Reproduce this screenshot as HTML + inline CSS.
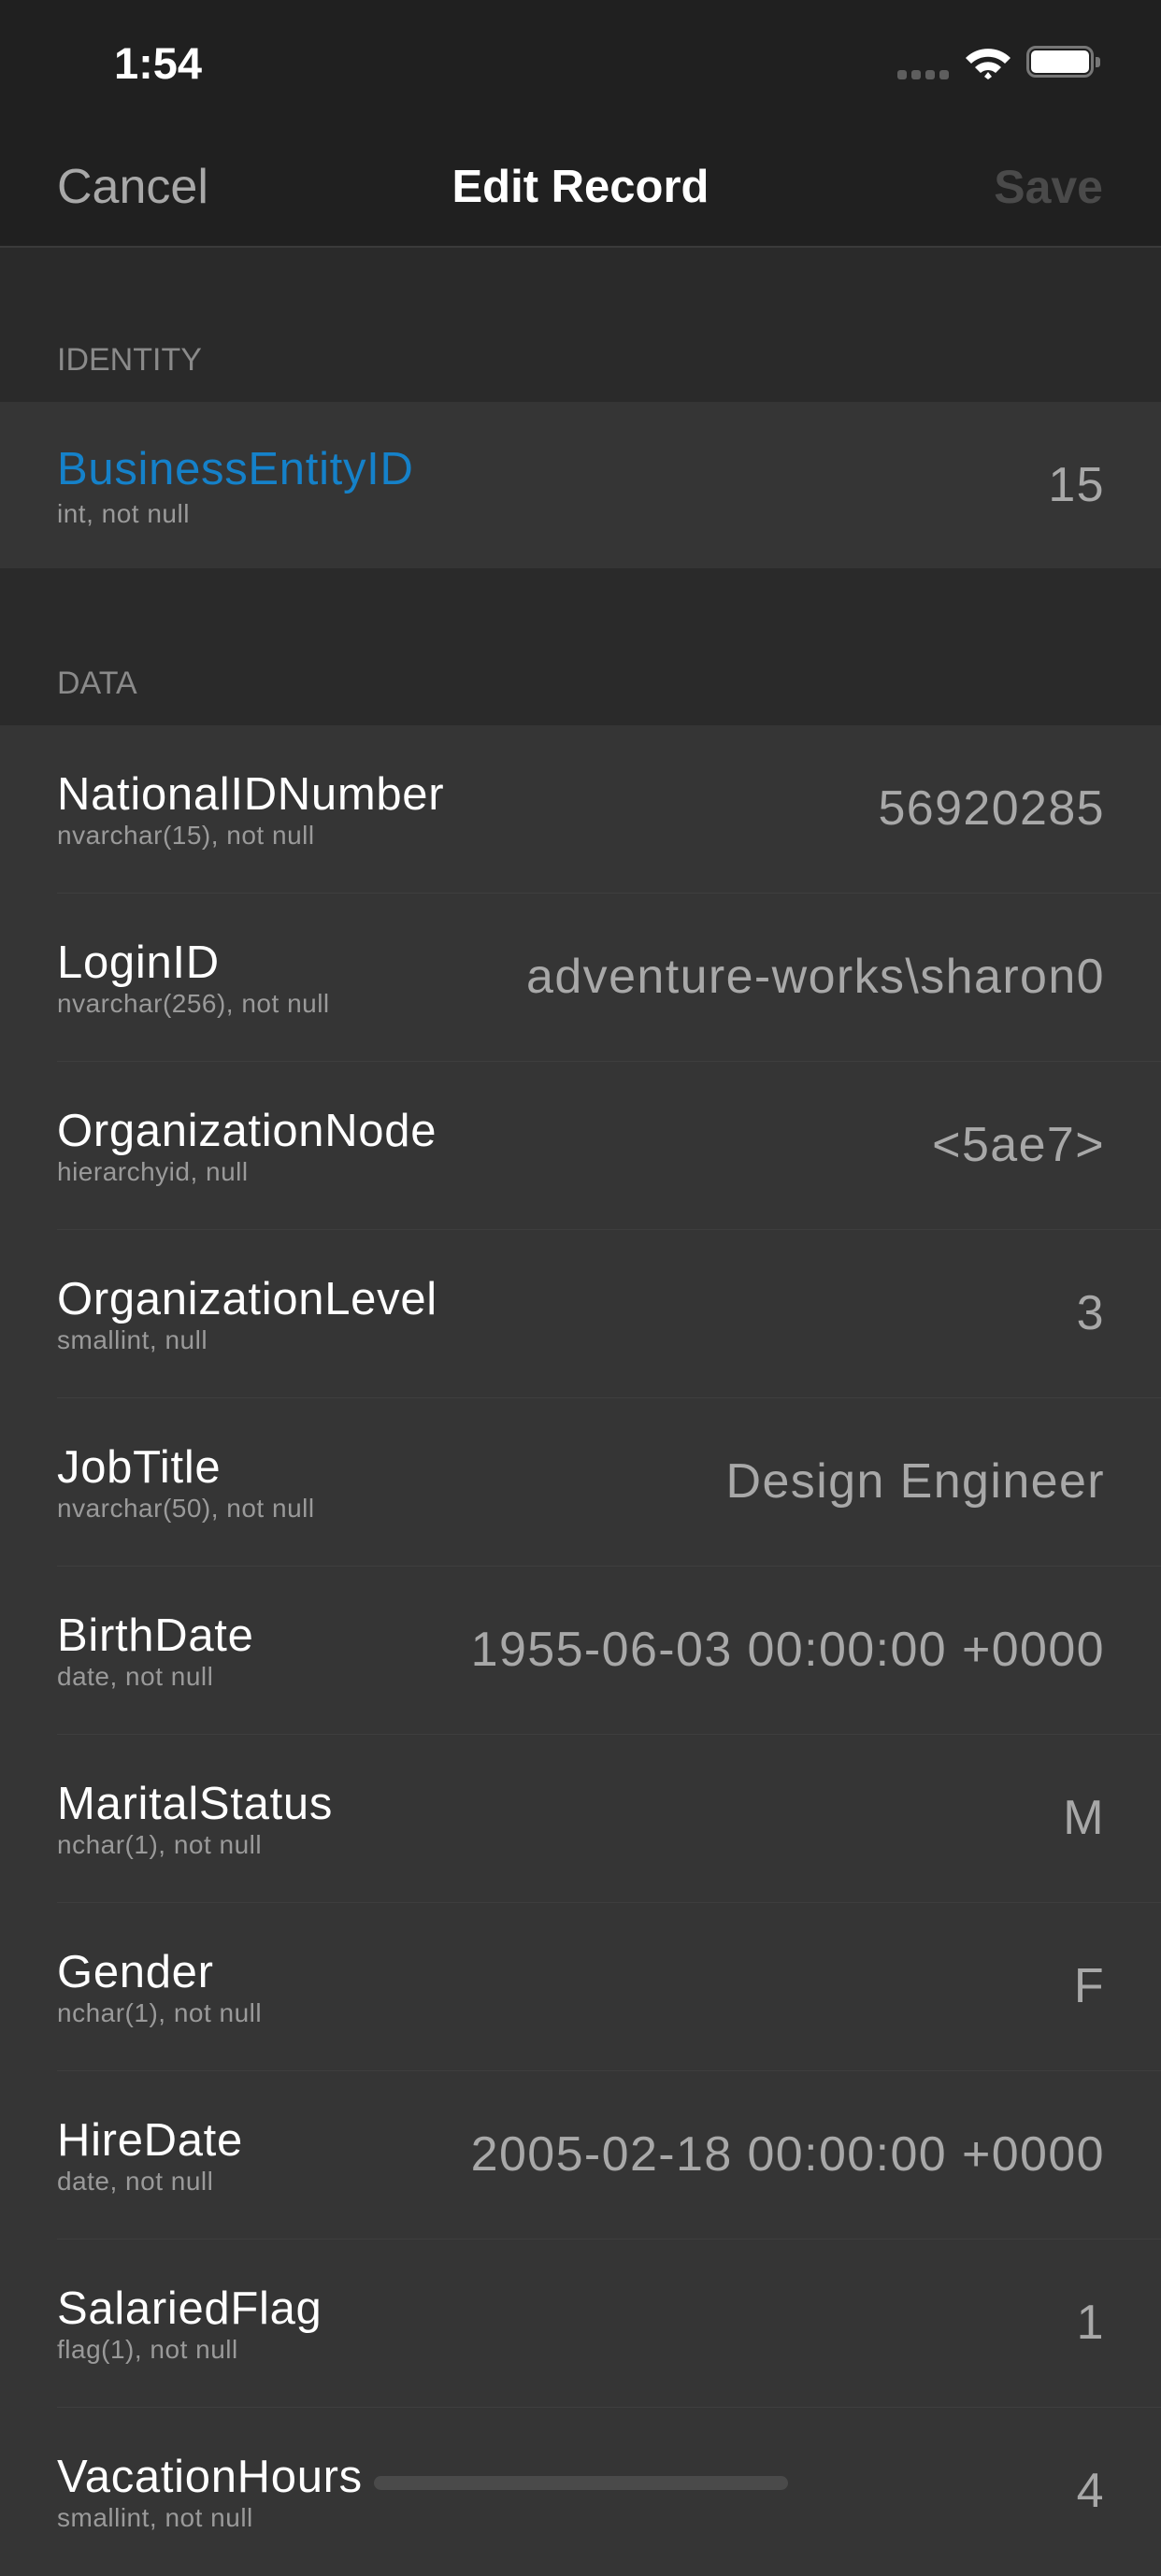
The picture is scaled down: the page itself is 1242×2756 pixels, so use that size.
<!DOCTYPE html>
<html><head><meta charset="utf-8"><style>
*{margin:0;padding:0;box-sizing:border-box}
body{width:1242px;height:2688px;background:#2a2a2a;font-family:"Liberation Sans",sans-serif;position:relative;overflow:hidden}
.a{position:absolute;white-space:nowrap}
.nav{position:absolute;left:0;top:0;width:1242px;height:265px;background:#202020;border-bottom:2px solid #3a3a3a}
.row{position:absolute;left:0;width:1242px;height:180px;background:#353535}
.sep{position:absolute;left:61px;right:0;bottom:0;height:1px;background:#3e3e3e}
.t{position:absolute;left:61px;font-size:49px;letter-spacing:0.7px;color:#fff;line-height:60px;white-space:nowrap}
.s{position:absolute;left:61px;font-size:28px;letter-spacing:0.5px;color:#9a9a9a;line-height:32px;white-space:nowrap}
.v{position:absolute;right:60px;font-size:52px;letter-spacing:1.4px;color:#a8a8a8;line-height:60px;white-space:nowrap}
.h{position:absolute;left:61px;font-size:34px;color:#8a8a8a;line-height:40px}
</style></head><body>
<div class="nav">
<div class="a" style="left:122px;top:40px;font-size:47px;font-weight:bold;color:#fff">1:54</div>
<div class="a" style="left:960px;top:75px;width:10px;height:10px;border-radius:3px;background:#5e5e5e"></div>
<div class="a" style="left:975px;top:75px;width:10px;height:10px;border-radius:3px;background:#5e5e5e"></div>
<div class="a" style="left:990px;top:75px;width:10px;height:10px;border-radius:3px;background:#5e5e5e"></div>
<div class="a" style="left:1005px;top:75px;width:10px;height:10px;border-radius:3px;background:#5e5e5e"></div>
<svg class="a" style="left:1030px;top:48px" width="54" height="38" viewBox="0 0 54 38"><path d="M3 14 A34 34 0 0 1 51 14 L45 20 A26 26 0 0 0 9 20Z M13 24 A20 20 0 0 1 41 24 L35 30 A12 12 0 0 0 19 30Z M23 34 L27 29 L31 34 L27 37Z" fill="#fff"/></svg>
<div class="a" style="left:1098px;top:49px;width:72px;height:34px;border:3px solid #777;border-radius:10px"></div>
<div class="a" style="left:1103px;top:54px;width:62px;height:24px;background:#fff;border-radius:5px"></div>
<div class="a" style="left:1172px;top:61px;width:5px;height:11px;background:#777;border-radius:0 3px 3px 0"></div>
<div class="a" style="left:61px;top:170px;font-size:52px;color:#a8a8a8;line-height:60px">Cancel</div>
<div class="a" style="left:0;width:1242px;text-align:center;top:170px;font-size:49px;font-weight:bold;color:#fff;line-height:60px">Edit Record</div>
<div class="a" style="right:62px;top:170px;font-size:50px;font-weight:bold;color:#4a4a4a;line-height:60px">Save</div>
</div>
<div class="h" style="top:365px">IDENTITY</div>
<div class="row" style="top:430px;height:178px">
<div class="t" style="top:42px;color:#1581c9">BusinessEntityID</div>
<div class="s" style="top:104px">int, not null</div>
<div class="v" style="top:59px">15</div>
</div>
<div class="h" style="top:711px">DATA</div>

<div class="row" style="top:776px"><div class="t" style="top:44px">NationalIDNumber</div><div class="s" style="top:102px">nvarchar(15), not null</div><div class="v" style="top:59px">56920285</div><div class="sep"></div></div>
<div class="row" style="top:956px"><div class="t" style="top:44px">LoginID</div><div class="s" style="top:102px">nvarchar(256), not null</div><div class="v" style="top:59px">adventure-works\sharon0</div><div class="sep"></div></div>
<div class="row" style="top:1136px"><div class="t" style="top:44px">OrganizationNode</div><div class="s" style="top:102px">hierarchyid, null</div><div class="v" style="top:59px">&lt;5ae7&gt;</div><div class="sep"></div></div>
<div class="row" style="top:1316px"><div class="t" style="top:44px">OrganizationLevel</div><div class="s" style="top:102px">smallint, null</div><div class="v" style="top:59px">3</div><div class="sep"></div></div>
<div class="row" style="top:1496px"><div class="t" style="top:44px">JobTitle</div><div class="s" style="top:102px">nvarchar(50), not null</div><div class="v" style="top:59px">Design Engineer</div><div class="sep"></div></div>
<div class="row" style="top:1676px"><div class="t" style="top:44px">BirthDate</div><div class="s" style="top:102px">date, not null</div><div class="v" style="top:59px">1955-06-03 00:00:00 +0000</div><div class="sep"></div></div>
<div class="row" style="top:1856px"><div class="t" style="top:44px">MaritalStatus</div><div class="s" style="top:102px">nchar(1), not null</div><div class="v" style="top:59px">M</div><div class="sep"></div></div>
<div class="row" style="top:2036px"><div class="t" style="top:44px">Gender</div><div class="s" style="top:102px">nchar(1), not null</div><div class="v" style="top:59px">F</div><div class="sep"></div></div>
<div class="row" style="top:2216px"><div class="t" style="top:44px">HireDate</div><div class="s" style="top:102px">date, not null</div><div class="v" style="top:59px">2005-02-18 00:00:00 +0000</div><div class="sep"></div></div>
<div class="row" style="top:2396px"><div class="t" style="top:44px">SalariedFlag</div><div class="s" style="top:102px">flag(1), not null</div><div class="v" style="top:59px">1</div><div class="sep"></div></div>
<div class="row" style="top:2576px"><div class="t" style="top:44px">VacationHours</div><div class="s" style="top:102px">smallint, not null</div><div class="v" style="top:59px">4</div></div>
<div class="a" style="left:400px;top:2649px;width:443px;height:15px;border-radius:8px;background:#4a4a4a"></div>
</body></html>
